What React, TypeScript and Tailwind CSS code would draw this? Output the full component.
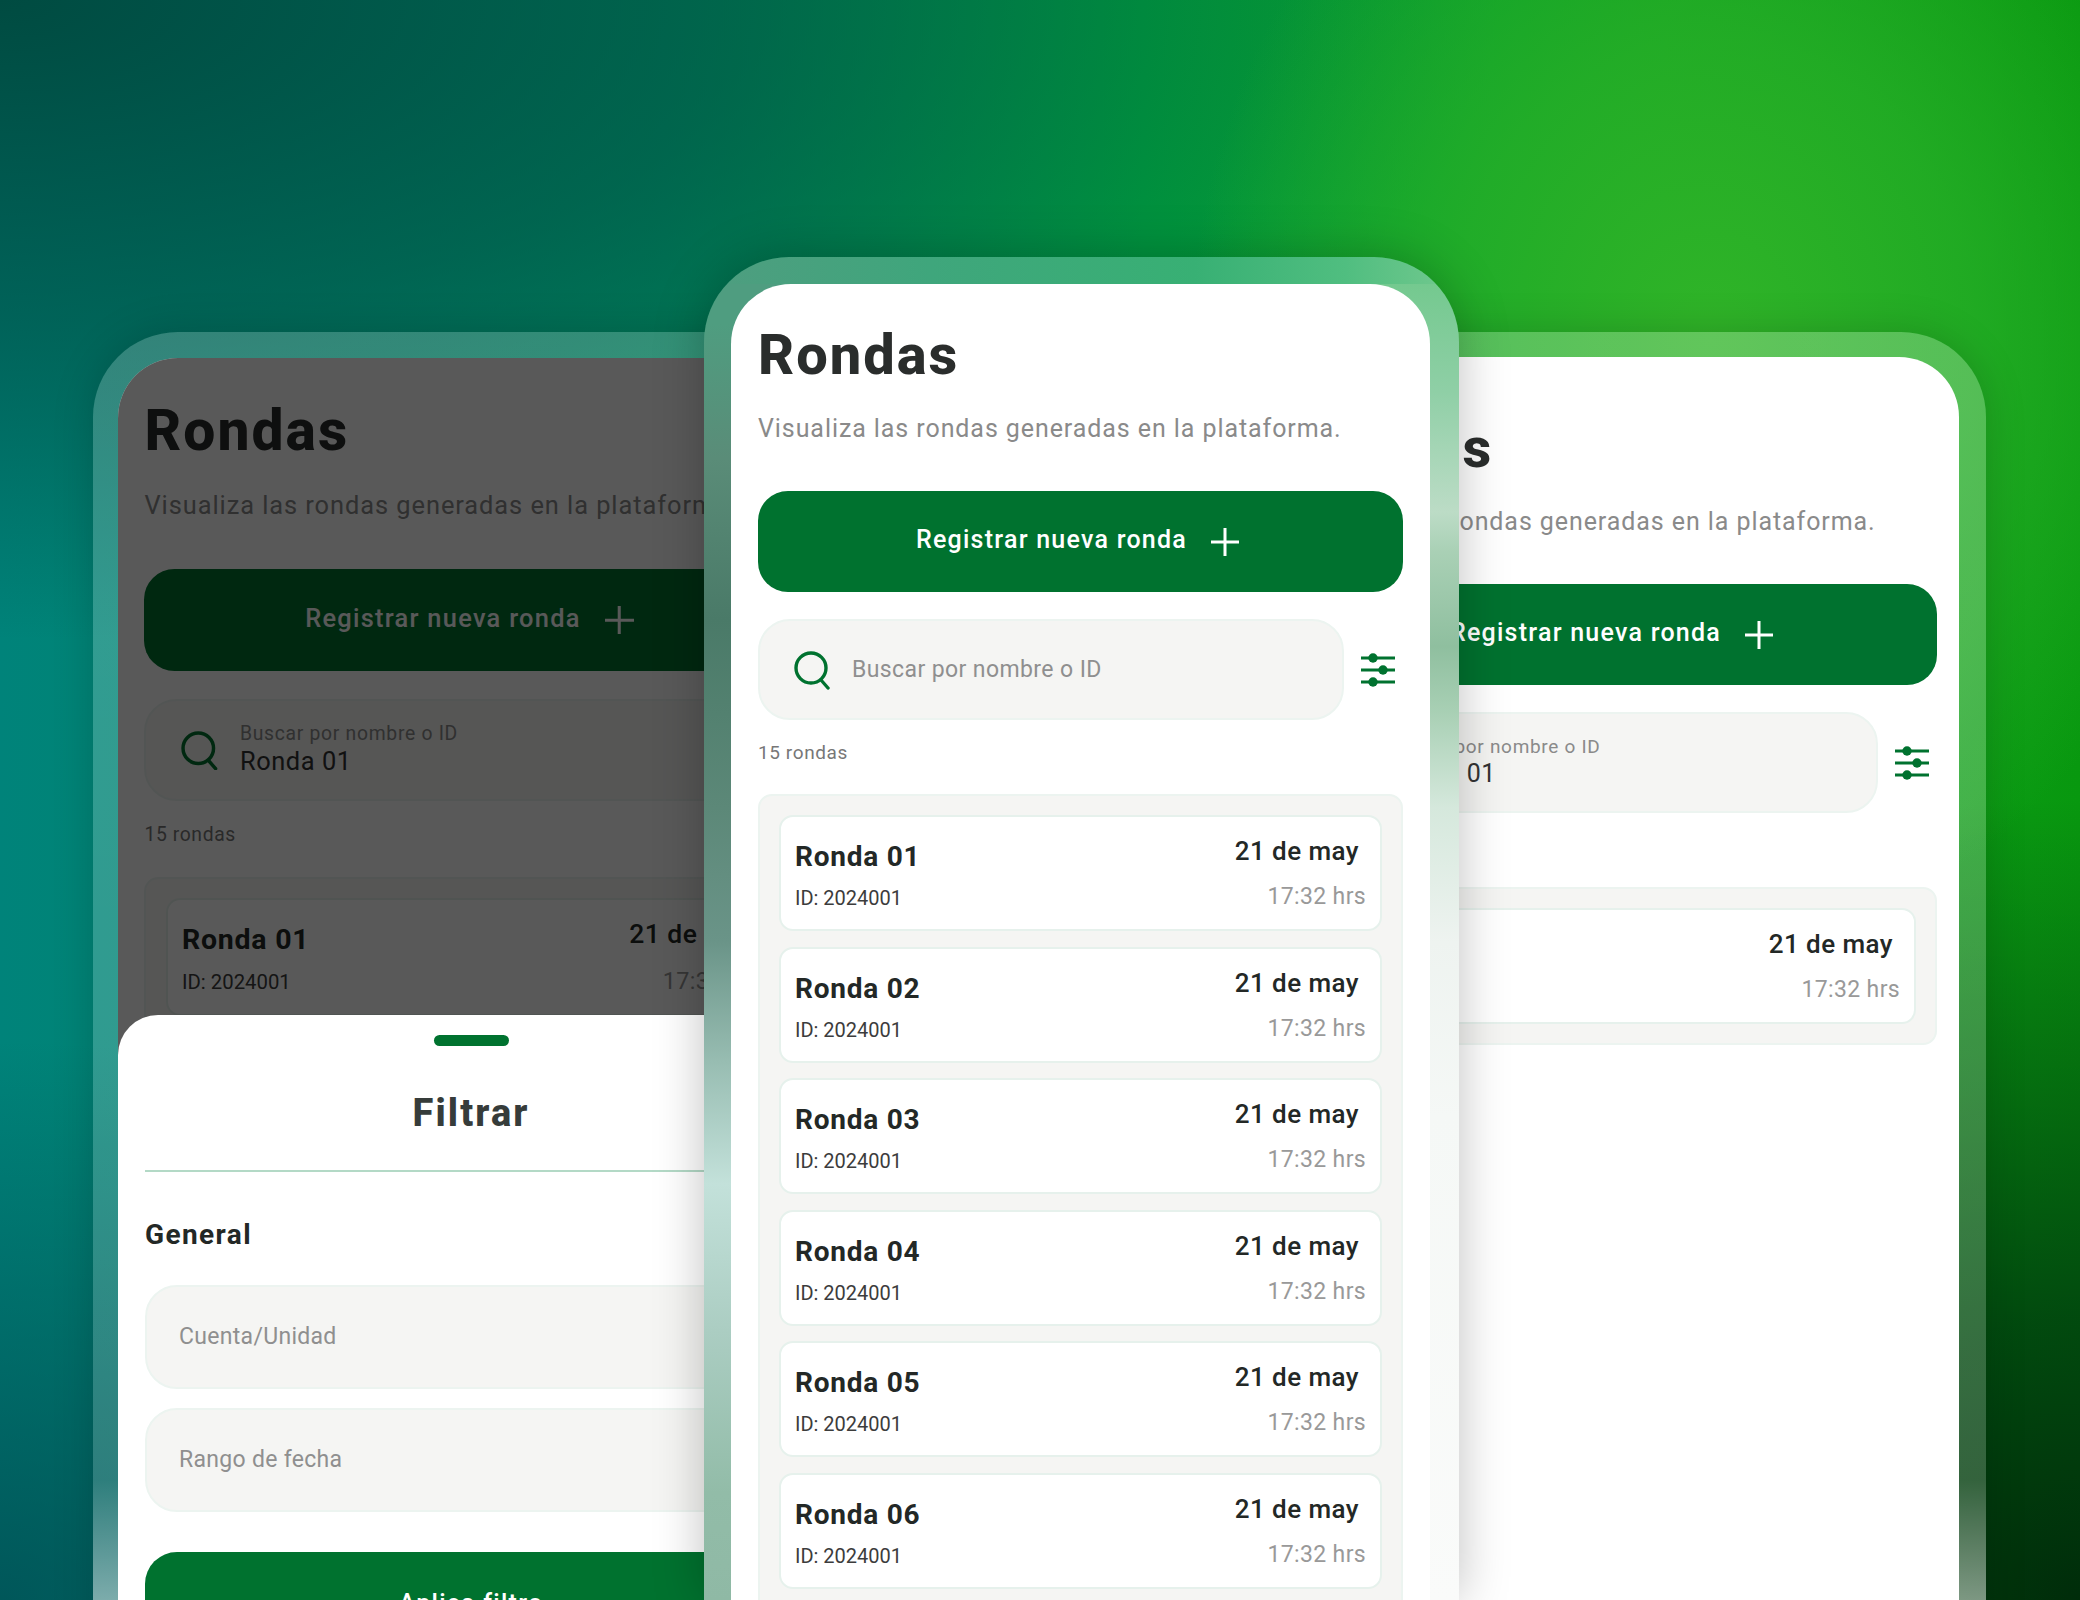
const GREEN = 'bg-[#00722f]';

function SearchIcon({ className }: { className: string }) {
  return (
    <svg viewBox="0 0 36 40" fill="none" className={className}>
      <circle cx="17" cy="18" r="15" stroke="#00722f" strokeWidth="3.4" />
      <path d="M27 30l7 8" stroke="#00722f" strokeWidth="3.4" strokeLinecap="round" />
    </svg>
  );
}

function SlidersIcon() {
  return (
    <svg viewBox="0 0 34 34" className="w-[34px] h-[34px] shrink-0">
      <g stroke="#00722f" strokeWidth="3.2">
        <path d="M0 5h34M0 17h34M0 29h34" />
      </g>
      <g fill="#00722f">
        <circle cx="12" cy="5" r="4.7" />
        <circle cx="22" cy="17" r="4.7" />
        <circle cx="12" cy="29" r="4.7" />
      </g>
    </svg>
  );
}

function PlusIcon() {
  return (
    <svg viewBox="0 0 28 28" className="w-[28px] h-[28px] shrink-0">
      <path d="M14 0v28M0 14h28" stroke="#fff" strokeWidth="3" strokeLinecap="round" />
    </svg>
  );
}

function RoundCard({ name }: { name: string }) {
  return (
    <div className="h-[116px] rounded-[14px] bg-white border-2 border-[#e6f1ec] flex justify-between pl-[14px] pr-[14px]">
      <div className="flex flex-col">
        <span className="mt-[23px] text-[28px] leading-[34px] font-bold tracking-[0.75px] text-[#232826]">{name}</span>
        <span className="mt-[12px] text-[20px] leading-[24px] text-[#3c3c3c]">ID: 2024001</span>
      </div>
      <div className="flex flex-col items-end">
        <span className="mt-[18px] mr-[7px] text-[26px] leading-[32px] font-medium tracking-[0.45px] text-[#232826]">21 de may</span>
        <span className="mt-[16px] text-[23px] leading-[28px] tracking-[0.35px] text-[#999]">17:32 hrs</span>
      </div>
    </div>
  );
}

function Rounds({ value, names, pt }: { value?: string; names: string[]; pt: string }) {
  return (
    <div className={`flex flex-col w-[645px] ${pt}`}>
      <h1 className="text-[56px] leading-[60px] font-extrabold tracking-[2px] text-[#2a2d2c]">Rondas</h1>
      <p className="mt-[28px] text-[25px] leading-[32px] tracking-[0.92px] text-[#8a8a8a] whitespace-nowrap">Visualiza las rondas generadas en la plataforma.</p>
      <button className={`mt-[46px] h-[101px] rounded-[30px] ${GREEN} flex items-center justify-center gap-[24px] pr-[6px] text-white text-[25px] font-medium tracking-[1.25px]`}>
        <span className="-mt-[3px]">Registrar nueva ronda</span>
        <PlusIcon />
      </button>
      <div className="mt-[27px] flex items-center">
        <div className="w-[586px] h-[101px] rounded-[32px] bg-[#f5f5f3] border-2 border-[#ecf4f0] flex items-center pl-[34px] gap-[22px]">
          <SearchIcon className="w-[36px] h-[40px] shrink-0" />
          {value ? (
            <div className="flex flex-col">
              <span className="mb-[1px] text-[19px] leading-[22px] tracking-[0.7px] text-[#8a8a8a]">Buscar por nombre o ID</span>
              <span className="text-[25px] leading-[30px] tracking-[0.55px] text-[#333]">{value}</span>
            </div>
          ) : (
            <span className="mt-[2px] text-[23px] tracking-[0.4px] text-[#8f8f8f]">Buscar por nombre o ID</span>
          )}
        </div>
        <div className="ml-[17px]"><SlidersIcon /></div>
      </div>
      <span className="mt-[21px] text-[19px] leading-[24px] tracking-[0.6px] text-[#777]">15 rondas</span>
      <div className="mt-[29px] rounded-[14px] bg-[#f5f5f3] border-2 border-[#ecf4f0] px-[19px] py-[19px] flex flex-col gap-[15.5px]">
        {names.map((n) => <RoundCard key={n} name={n} />)}
      </div>
    </div>
  );
}

function FilterSheet() {
  return (
    <div className="absolute left-0 right-0 top-[657px] h-[700px] rounded-t-[40px] bg-white flex flex-col pl-[27px] pr-[26px]">
      <div className="mt-[20px] w-[75px] h-[11px] rounded-full bg-[#00722f] self-center" />
      <h2 className="mt-[45px] self-center text-[38px] leading-[44px] font-extrabold tracking-[2.1px] text-[#363c3a]">Filtrar</h2>
      <div className="mt-[35px] h-[2px] bg-[#b3d9c6]" />
      <h3 className="mt-[46px] text-[28px] leading-[34px] font-bold tracking-[1.4px] text-[#232826]">General</h3>
      <div className="mt-[33px] h-[104px] rounded-[32px] bg-[#f5f5f3] border-2 border-[#ecf4f0] flex items-center pl-[32px] text-[23px] tracking-[0.3px] text-[#8f8f8f]">Cuenta/Unidad</div>
      <div className="mt-[19px] h-[104px] rounded-[32px] bg-[#f5f5f3] border-2 border-[#ecf4f0] flex items-center pl-[32px] text-[23px] tracking-[0.3px] text-[#8f8f8f]">Rango de fecha</div>
      <button className={`mt-[40px] h-[104px] rounded-[32px] ${GREEN} text-white text-[25px] font-medium tracking-[1.25px]`}>Aplica filtro</button>
    </div>
  );
}

export default function App() {
  const names = ['Ronda 01', 'Ronda 02', 'Ronda 03', 'Ronda 04', 'Ronda 05', 'Ronda 06', 'Ronda 07'];
  return (
    <div className="relative w-[2080px] h-[1600px] overflow-hidden font-['Roboto',sans-serif] bg-[radial-gradient(ellipse_520px_600px_at_1710px_340px,#30b428_0%,rgba(40,176,40,0.75)_50%,rgba(20,160,40,0)_100%),radial-gradient(ellipse_1000px_800px_at_2080px_1600px,#002c0a_0%,rgba(0,60,14,0.85)_35%,rgba(0,110,25,0)_100%),radial-gradient(ellipse_1500px_640px_at_0px_0px,rgba(0,72,62,0.95)_0%,rgba(0,72,62,0.55)_50%,rgba(0,72,62,0)_100%),radial-gradient(ellipse_800px_560px_at_0px_1600px,rgba(0,68,76,0.7)_0%,rgba(0,68,76,0)_100%),linear-gradient(90deg,#00837a_0%,#008a60_32%,#00a03e_55%,#12a020_80%,#08980f_100%)]">
      {/* left phone, filter sheet open */}
      <div className="absolute left-[93px] top-[332px] w-[756px] h-[1400px] rounded-[85px] pt-[26px] pr-[26px] pb-[26px] pl-[25px] shadow-[0_0_40px_rgba(0,0,0,0.18)] bg-[linear-gradient(180deg,rgba(255,255,255,0.2)_0%,rgba(255,255,255,0.18)_82%,rgba(255,255,255,0.5)_91%)]">
        <div className="relative h-full rounded-[60px] bg-white overflow-hidden">
          <div className="[zoom:1.017] pl-[26px]">
            <Rounds value="Ronda 01" names={names.slice(0, 2)} pt="pt-[41px]" />
          </div>
          <div className="absolute inset-0 bg-black/65" />
          <FilterSheet />
        </div>
      </div>
      {/* right phone */}
      <div className="absolute left-[1235px] top-[332px] w-[751px] h-[1400px] rounded-[85px] pt-[25px] pl-[26px] pr-[27px] pb-[26px] shadow-[0_0_40px_rgba(0,0,0,0.18)] bg-[linear-gradient(180deg,rgba(255,255,255,0.24)_0%,rgba(255,255,255,0.2)_82%,rgba(255,255,255,0.5)_91%)]">
        <div className="h-full rounded-[60px] bg-white overflow-hidden pl-[31px]">
          <Rounds value="Ronda 01" names={names.slice(0, 1)} pt="pt-[61px]" />
        </div>
      </div>
      {/* center phone: frame colours follow what shows through the glass */}
      <div className="absolute left-[704px] top-[257px] w-[755px] h-[1343px] rounded-t-[85px] pt-[27px] pl-[27px] pr-[29px] shadow-[0_0_50px_rgba(0,0,0,0.25)] [background:linear-gradient(90deg,#4f9d80_0%,#3fa67c_30%,#38b074_65%,#50be80_85%,#74c98f_100%)_top/100%_27px_no-repeat,linear-gradient(180deg,#4f9d80_5%,#5a8c78_15%,#4a7a68_27%,#5c8878_41%,#6a9488_51%,#98bdb2_60%,#c3e1da_69%,#abcdc2_80%,#92bca8_92%,#8fb9a5_100%)_left/50%_100%_no-repeat,linear-gradient(180deg,#74c98f_2%,#8fcfa6_10%,#bcdcc6_19%,#a9d0b5_22%,#8fbf9f_29%,#a9d0b5_34%,#d5e8dc_41%,#eef3f0_51%,#f5f8f6_64%,#fafbfa_100%)_right/50%_100%_no-repeat]">
        <div className="h-full rounded-t-[60px] bg-white overflow-hidden pl-[27px]">
          <Rounds names={names} pt="pt-[41px]" />
        </div>
      </div>
    </div>
  );
}
